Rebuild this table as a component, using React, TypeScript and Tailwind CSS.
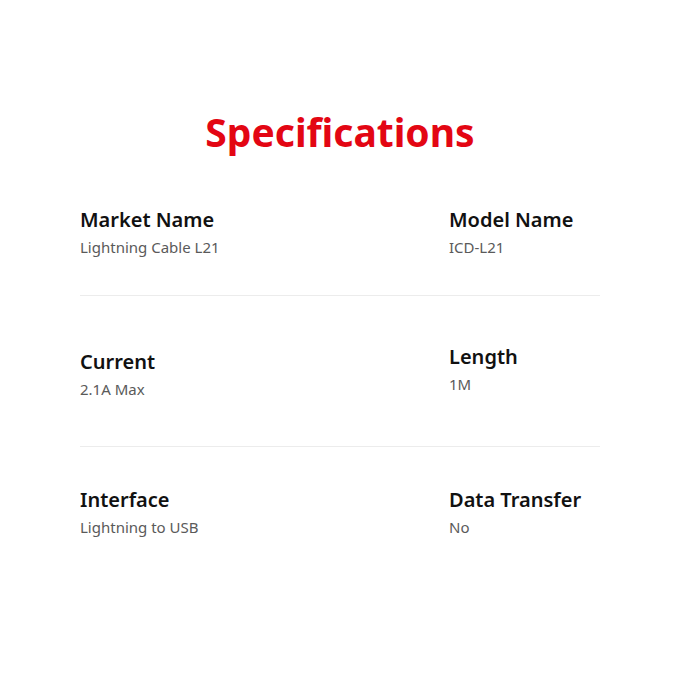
import React from "react";

const font = { fontFamily: '"Noto Sans", "DejaVu Sans", sans-serif' };

function Cell({ label, value, shift = false }: { label: string; value: string; shift?: boolean }) {
  return (
    <div className={shift ? "-mt-[5px] flex flex-col" : "flex flex-col"}>
      <div className="text-[20px] leading-[28px] font-semibold text-[#111111]">{label}</div>
      <div className="mt-[3px] text-[15px] leading-[20px] text-[#5a5a5a]">{value}</div>
    </div>
  );
}

export default function App() {
  return (
    <div className="w-[680px] h-[680px] bg-white" style={font}>
      <div className="pt-[108px] flex justify-center">
        <h1 className="text-[39px] leading-[48px] font-bold text-[#e30613]">Specifications</h1>
      </div>
      <div className="mx-[80px] w-[520px] mt-[50px]">
        <div className="grid grid-cols-[369px_1fr]">
          <Cell label="Market Name" value="Lightning Cable L21" />
          <Cell label="Model Name" value="ICD-L21" />
        </div>
        <div className="mt-[38px] h-px bg-[#ececec]" />
        <div className="grid grid-cols-[369px_1fr] pt-[52px]">
          <Cell label="Current" value="2.1A Max" />
          <Cell label="Length" value="1M" shift />
        </div>
        <div className="mt-[47px] h-px bg-[#ececec]" />
        <div className="grid grid-cols-[369px_1fr] pt-[39px]">
          <Cell label="Interface" value="Lightning to USB" />
          <Cell label="Data Transfer" value="No" />
        </div>
      </div>
    </div>
  );
}
